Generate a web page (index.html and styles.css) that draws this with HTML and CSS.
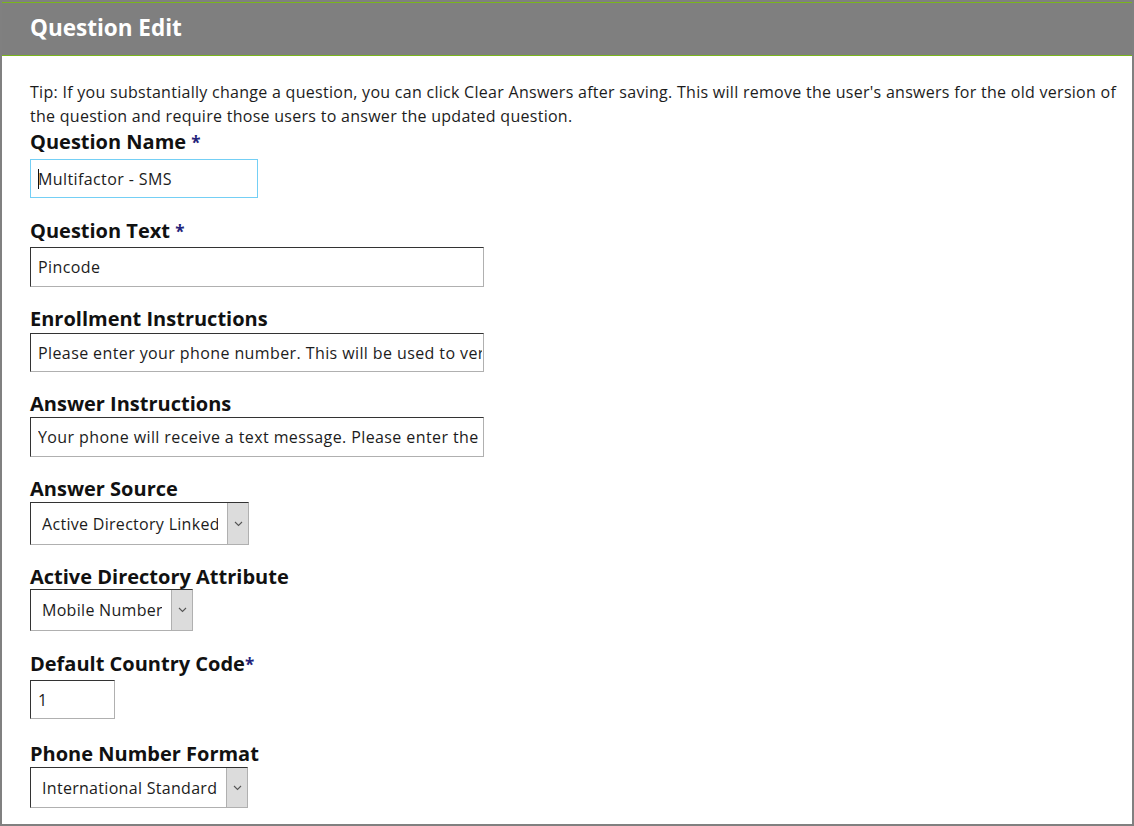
FILE: index.html
```html
<!DOCTYPE html>
<html lang="en">
<head>
<meta charset="utf-8">
<title>Question Edit</title>
<link rel="stylesheet" href="styles.css">
</head>
<body>
<div class="frame">
  <div class="header"><h1 class="title">Question Edit</h1></div>
  <div class="content">
    <p class="tip">Tip: If you substantially change a question, you can click Clear Answers after saving. This will remove the user's answers for the old version of the question and require those users to answer the updated question.</p>

    <div class="field f-name">
      <label class="label">Question Name <span class="req">*</span></label>
      <span class="input-wrap">
        <input class="input input-name is-focused" type="text" value="Multifactor - SMS">
        <span class="caret"></span>
      </span>
    </div>

    <div class="field f-text">
      <label class="label">Question Text <span class="req">*</span></label>
      <input class="input input-wide" type="text" value="Pincode">
    </div>

    <div class="field f-enroll">
      <label class="label">Enrollment Instructions</label>
      <input class="input input-wide input-short" type="text" value="Please enter your phone number. This will be used to verify your identity.">
    </div>

    <div class="field f-answer">
      <label class="label">Answer Instructions</label>
      <input class="input input-wide" type="text" value="Your phone will receive a text message. Please enter the code you receive.">
    </div>

    <div class="field f-source">
      <label class="label">Answer Source</label>
      <span class="select-wrap sel-source">
        <select class="select"><option>Active Directory Linked</option></select>
        <span class="arrow"><svg width="9" height="6" viewBox="0 0 9 6"><path d="M1 1 L4.5 4.5 L8 1" fill="none" stroke="#555" stroke-width="1.1"/></svg></span>
      </span>
    </div>

    <div class="field f-attr">
      <label class="label">Active Directory Attribute</label>
      <span class="select-wrap sel-attr">
        <select class="select"><option>Mobile Number</option></select>
        <span class="arrow"><svg width="9" height="6" viewBox="0 0 9 6"><path d="M1 1 L4.5 4.5 L8 1" fill="none" stroke="#555" stroke-width="1.1"/></svg></span>
      </span>
    </div>

    <div class="field f-code">
      <label class="label">Default Country Code<span class="req">*</span></label>
      <input class="input input-code" type="text" value="1">
    </div>

    <div class="field f-format">
      <label class="label">Phone Number Format</label>
      <span class="select-wrap sel-format">
        <select class="select"><option>International Standard</option></select>
        <span class="arrow"><svg width="9" height="6" viewBox="0 0 9 6"><path d="M1 1 L4.5 4.5 L8 1" fill="none" stroke="#555" stroke-width="1.1"/></svg></span>
      </span>
    </div>
  </div>
</div>
</body>
</html>
```

FILE: styles.css
```css
html, body {
  margin: 0;
  padding: 0;
  background: #ffffff;
}

body {
  font-family: "Open Sans", "DejaVu Sans", sans-serif;
  color: #1c1c1c;
}

.frame {
  box-sizing: border-box;
  width: 1134px;
  height: 826px;
  border: 2px solid #808080;
  overflow: hidden;
  background: #ffffff;
}

.header {
  background: #7f7f7f;
  border-top: 1px solid #7ab51d;
  border-bottom: 1px solid #7ab51d;
  height: 52px;
  display: flex;
  align-items: center;
  padding-left: 28px;
}

.title {
  margin: 0;
  font-size: 22.5px;
  font-weight: 700;
  color: #ffffff;
  line-height: 1;
  padding-bottom: 1px;
}

.content {
  padding: 24px 10px 0 28px;
}

.tip {
  margin: 0 0 2px;
  font-size: 16px;
  letter-spacing: 0.28px;
  line-height: 24px;
  color: #1c1c1c;
}

.field {
  margin-bottom: 19px;
}

.label {
  display: block;
  font-size: 20px;
  font-weight: 700;
  line-height: 24px;
  color: #111111;
  margin-bottom: 4px;
}

/* per-field vertical rhythm */
.f-name { margin-bottom: 21px; }
.f-name .label { margin-bottom: 4px; }
.f-text { margin-bottom: 20px; }
.f-text .label { margin-bottom: 3px; }
.f-enroll { margin-bottom: 20px; }
.f-enroll .label { margin-bottom: 2px; }
.f-answer { margin-bottom: 20px; }
.f-answer .label { margin-bottom: 1px; }
.f-source { margin-bottom: 20px; }
.f-source .label { margin-bottom: 1px; }
.f-attr { margin-bottom: 21px; }
.f-attr .label { margin-bottom: 0; }
.f-code { margin-bottom: 23px; }
.f-code .label { margin-bottom: 3px; }
.f-format .label { margin-bottom: 1px; }

.req {
  color: #23237a;
  font-size: 17px;
}

.input {
  display: block;
  box-sizing: border-box;
  height: 40px;
  margin: 0;
  padding: 0 1px 0 7px;
  font-family: "Open Sans", "DejaVu Sans", sans-serif;
  font-size: 16px;
  letter-spacing: 0.4px;
  color: #1c1c1c;
  background: #ffffff;
  border: 1px solid;
  border-color: #333333 #b0b0b0 #b0b0b0 #333333;
  border-radius: 0;
  outline: none;
}

.input-wrap {
  position: relative;
  display: inline-block;
}

.input-name {
  width: 228px;
  height: 39px;
}

.input-name.is-focused {
  border-color: #74cff5;
}

.caret {
  position: absolute;
  left: 8px;
  top: 10px;
  width: 1px;
  height: 20px;
  background: #111111;
}

.input-wide {
  width: 454px;
}

.input-short {
  height: 39px;
}

.input-code {
  width: 85px;
  height: 39px;
}

.select-wrap {
  position: relative;
  display: inline-block;
}

.select {
  display: block;
  box-sizing: border-box;
  height: 43px;
  margin: 0;
  padding: 0 30px 0 11px;
  -webkit-appearance: none;
  appearance: none;
  font-family: "Open Sans", "DejaVu Sans", sans-serif;
  font-size: 16px;
  letter-spacing: 0.3px;
  color: #1c1c1c;
  background: #ffffff;
  border: 1px solid;
  border-color: #333333 #b0b0b0 #b0b0b0 #333333;
  border-radius: 0;
  outline: none;
}

.sel-source .select { width: 219px; }
.sel-attr .select { width: 163px; height: 42px; }
.sel-format .select { width: 218px; height: 41px; }

.arrow {
  position: absolute;
  top: 1px;
  right: 1px;
  bottom: 1px;
  width: 21px;
  box-sizing: border-box;
  background: #dcdcdc;
  border-left: 1px solid #b0b0b0;
  display: flex;
  align-items: center;
  justify-content: center;
}

.arrow svg {
  display: block;
}
```
